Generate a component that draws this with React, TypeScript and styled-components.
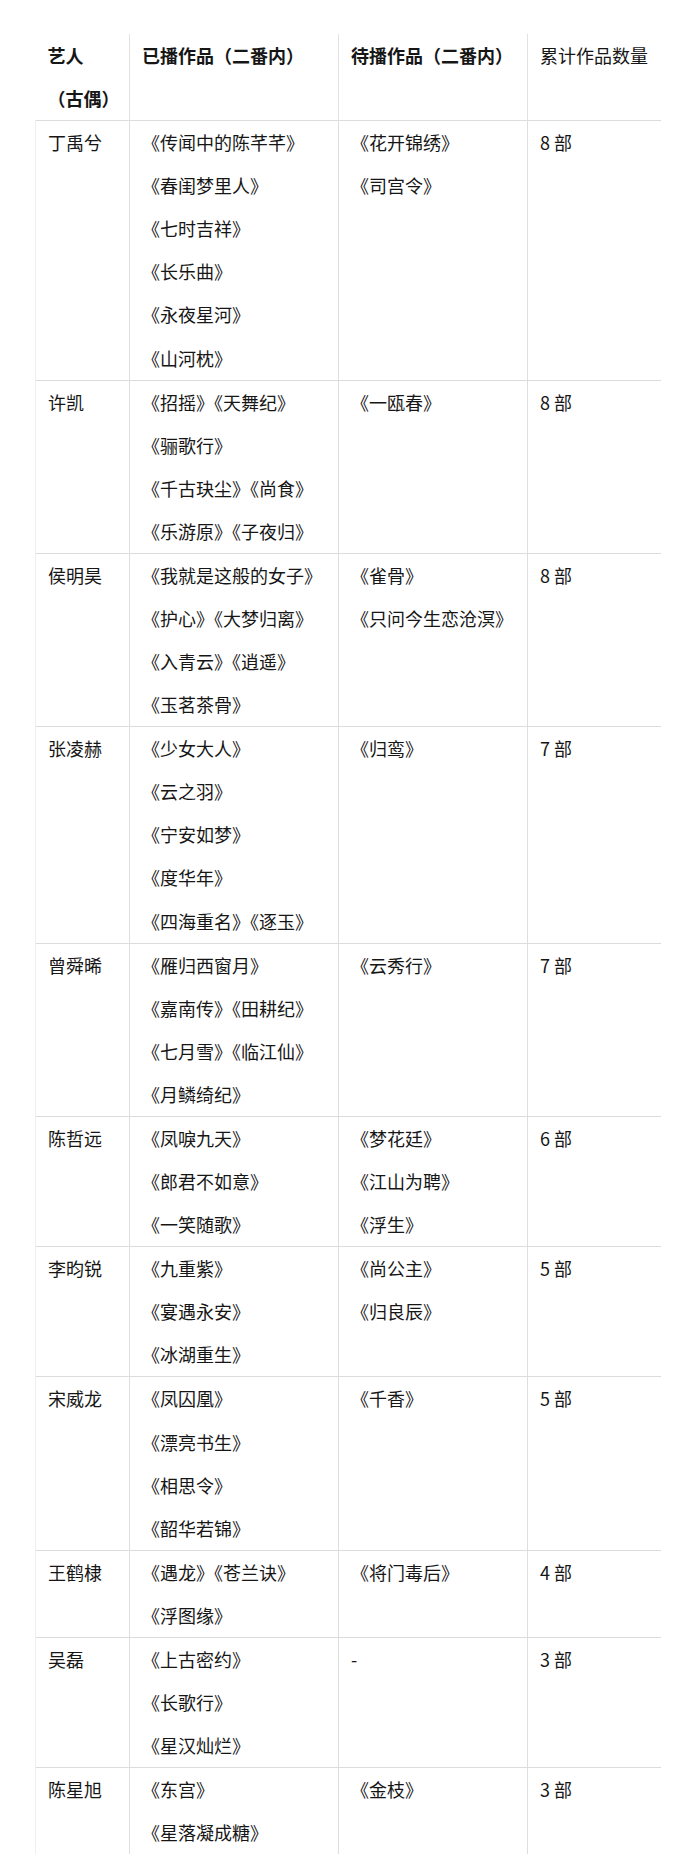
import styled, { createGlobalStyle } from 'styled-components';

const GlobalStyle = createGlobalStyle`
    html, body {
        margin: 0;
        padding: 0;
        background: #ffffff;
    }
    body {
        font-family: "Noto Sans CJK SC", "Noto Sans", sans-serif;
        color: #161616;
    }
`;

const Page = styled.div`
    padding: 34px 0 0 35px;
    width: 690px;
    box-sizing: border-box;
`;

const Table = styled.table`
    border-collapse: collapse;
    table-layout: fixed;
    width: 625px;
    font-size: 18px;
    line-height: 43.08px;
`;

const Row = styled.tr<{ last?: boolean }>`
    border-bottom: ${({ last }) => (last ? 'none' : '1px solid #dcdcdc')};
`;

const Cell = styled.td<{ first?: boolean }>`
    vertical-align: top;
    padding: 0 10px 0 12px;
    white-space: nowrap;
    border-left: 1px solid ${({ first }) => (first ? '#efefef' : '#dedede')};
`;

const HeadCell = styled.th<{ first?: boolean; light?: boolean }>`
    vertical-align: top;
    text-align: left;
    padding: 0 8px 0 12px;
    white-space: nowrap;
    font-weight: ${({ light }) => (light ? 400 : 700)};
    border-left: ${({ first }) => (first ? 'none' : '1px solid #e2e2e2')};
`;

const Line = styled.div`
    height: 43.08px;
`;

interface IArtist {
    name: string;
    aired: string[];
    upcoming: string[];
    count: string;
}

const artists: IArtist[] = [
    {
        name: '丁禹兮',
        aired: ['《传闻中的陈芊芊》', '《春闺梦里人》', '《七时吉祥》', '《长乐曲》', '《永夜星河》', '《山河枕》'],
        upcoming: ['《花开锦绣》', '《司宫令》'],
        count: '8 部',
    },
    {
        name: '许凯',
        aired: ['《招摇》《天舞纪》', '《骊歌行》', '《千古玦尘》《尚食》', '《乐游原》《子夜归》'],
        upcoming: ['《一瓯春》'],
        count: '8 部',
    },
    {
        name: '侯明昊',
        aired: ['《我就是这般的女子》', '《护心》《大梦归离》', '《入青云》《逍遥》', '《玉茗茶骨》'],
        upcoming: ['《雀骨》', '《只问今生恋沧溟》'],
        count: '8 部',
    },
    {
        name: '张凌赫',
        aired: ['《少女大人》', '《云之羽》', '《宁安如梦》', '《度华年》', '《四海重名》《逐玉》'],
        upcoming: ['《归鸾》'],
        count: '7 部',
    },
    {
        name: '曾舜晞',
        aired: ['《雁归西窗月》', '《嘉南传》《田耕纪》', '《七月雪》《临江仙》', '《月鳞绮纪》'],
        upcoming: ['《云秀行》'],
        count: '7 部',
    },
    {
        name: '陈哲远',
        aired: ['《凤唳九天》', '《郎君不如意》', '《一笑随歌》'],
        upcoming: ['《梦花廷》', '《江山为聘》', '《浮生》'],
        count: '6 部',
    },
    {
        name: '李昀锐',
        aired: ['《九重紫》', '《宴遇永安》', '《冰湖重生》'],
        upcoming: ['《尚公主》', '《归良辰》'],
        count: '5 部',
    },
    {
        name: '宋威龙',
        aired: ['《凤囚凰》', '《漂亮书生》', '《相思令》', '《韶华若锦》'],
        upcoming: ['《千香》'],
        count: '5 部',
    },
    {
        name: '王鹤棣',
        aired: ['《遇龙》《苍兰诀》', '《浮图缘》'],
        upcoming: ['《将门毒后》'],
        count: '4 部',
    },
    {
        name: '吴磊',
        aired: ['《上古密约》', '《长歌行》', '《星汉灿烂》'],
        upcoming: ['-'],
        count: '3 部',
    },
    {
        name: '陈星旭',
        aired: ['《东宫》', '《星落凝成糖》'],
        upcoming: ['《金枝》'],
        count: '3 部',
    },
];

const App = () => {
    return (
        <>
            <GlobalStyle />
            <Page>
                <Table>
                    <colgroup>
                        <col style={{ width: 94 }} />
                        <col style={{ width: 209 }} />
                        <col style={{ width: 189 }} />
                        <col style={{ width: 133 }} />
                    </colgroup>
                    <thead>
                        <Row>
                            <HeadCell first>
                                <Line>艺人</Line>
                                <Line>（古偶）</Line>
                            </HeadCell>
                            <HeadCell>已播作品（二番内）</HeadCell>
                            <HeadCell>待播作品（二番内）</HeadCell>
                            <HeadCell light>累计作品数量</HeadCell>
                        </Row>
                    </thead>
                    <tbody>
                        {artists.map((a, i) => (
                            <Row key={a.name} last={i === artists.length - 1}>
                                <Cell first>
                                    <Line>{a.name}</Line>
                                </Cell>
                                <Cell>
                                    {a.aired.map((t) => (
                                        <Line key={t}>{t}</Line>
                                    ))}
                                </Cell>
                                <Cell>
                                    {a.upcoming.map((t) => (
                                        <Line key={t}>{t}</Line>
                                    ))}
                                </Cell>
                                <Cell>
                                    <Line>{a.count}</Line>
                                </Cell>
                            </Row>
                        ))}
                    </tbody>
                </Table>
            </Page>
        </>
    );
};

export default App;
